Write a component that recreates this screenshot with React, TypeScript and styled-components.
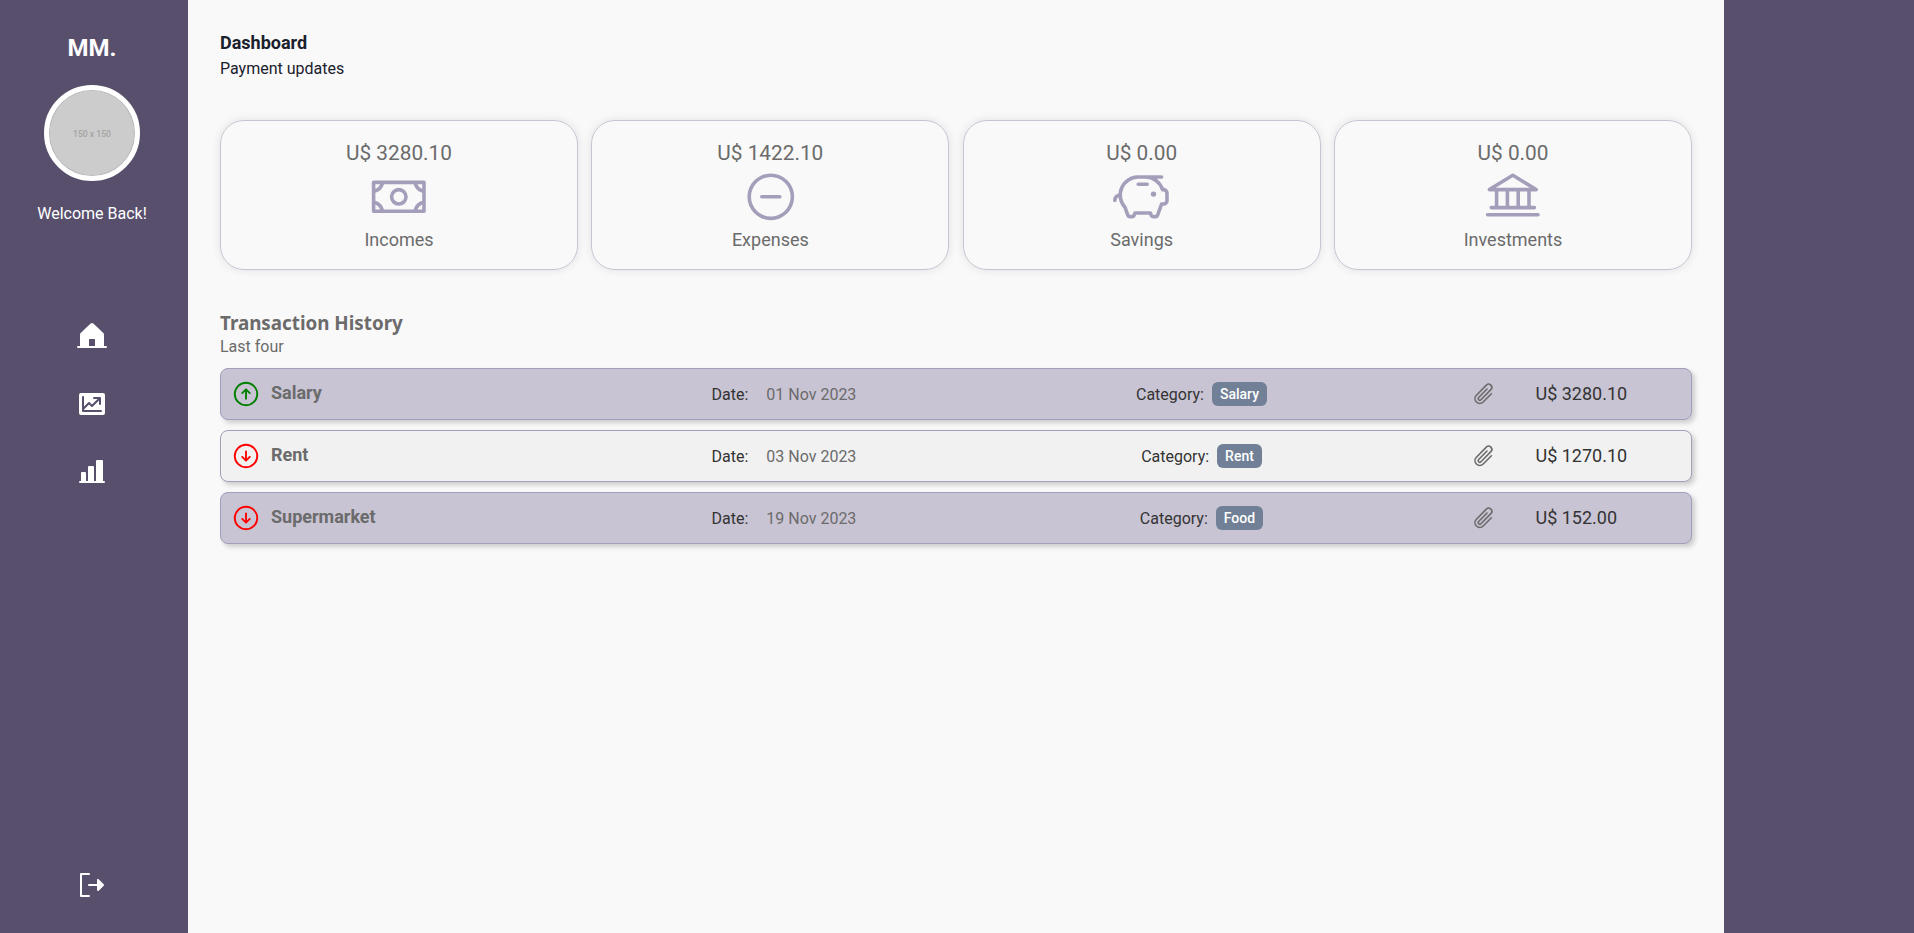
import React from "react";
import styled, { createGlobalStyle } from "styled-components";
import {
  PiMoney,
  PiMinusCircle,
  PiPiggyBank,
  PiBank,
  PiChartLineUpFill,
  PiChartBarFill,
  PiSignOutFill,
  PiArrowCircleUp,
  PiArrowCircleDown,
  PiPaperclip,
} from "react-icons/pi";

const GlobalStyle = createGlobalStyle`
  *, *::before, *::after { box-sizing: border-box; margin: 0; padding: 0; }
  body {
    background: #584f6d;
    font-family: Roboto, "Liberation Sans", sans-serif;
    font-size: 16px;
    line-height: 24px;
    color: #1a202c;
  }
  svg { display: block; }
`;

const Page = styled.div`
  display: flex;
  height: 100vh;
  min-height: 933px;
`;

const Sidebar = styled.aside`
  display: flex;
  flex-direction: column;
  align-items: center;
  flex: 0 0 188px;
  padding: 30px 4px 32px 0;
  color: #fff;
`;

const Brand = styled.h1`
  font-size: 24px;
  line-height: 36px;
  font-weight: 700;
`;

const Avatar = styled.div`
  display: flex;
  align-items: center;
  justify-content: center;
  width: 96px;
  height: 96px;
  margin-top: 19px;
  padding-top: 2px;
  border: 5px solid #fff;
  border-radius: 50%;
  background: #ccc;
  box-shadow: inset 0 0 0 0.6px #aaa;
  color: #a3a3a3;
  font: 500 8.6px Roboto, sans-serif;
`;

const Welcome = styled.p`
  margin-top: 21px;
`;

const Nav = styled.nav`
  display: flex;
  flex-direction: column;
  gap: 36px;
  margin-top: 94px;
  font-size: 32px;
`;

const SignOut = styled.div`
  margin-top: auto;
  padding-right: 2px;
  font-size: 32px;
`;

const Main = styled.main`
  flex: 0 0 1536px;
  padding: 29px 32px;
  background: #f9f9f9;
`;

const PageTitle = styled.h2`
  font-size: 18px;
  line-height: 27px;
  font-weight: 700;
`;

const PageNote = styled.p`
  margin-top: 1px;
`;

const Cards = styled.section`
  display: grid;
  grid-template-columns: repeat(4, 1fr);
  gap: 13.33px;
  margin-top: 39px;
`;

const Card = styled.article`
  display: flex;
  flex-direction: column;
  align-items: center;
  height: 150px;
  padding-top: 17px;
  border: 1px solid #c9c4d3;
  border-radius: 24px;
  box-shadow: 0 0 10px rgba(0, 0, 0, 0.1);
  color: #6b6b6b;
`;

const CardAmount = styled.p`
  font-size: 20.8px;
  line-height: 30px;
`;

const CardIcon = styled.div`
  color: #a59ebb;
  font-size: 57.6px;
`;

const CardLabel = styled.p`
  font-size: 18px;
  line-height: 27px;
`;

const History = styled.section`
  margin-top: 40px;
  color: #6b6b6b;
`;

const HistoryTitle = styled.h3`
  font-family: "Noto Sans", sans-serif;
  font-size: 18.8px;
  line-height: 27px;
  font-weight: 700;
`;

const HistoryNote = styled.p`
  line-height: 20px;
`;

const Rows = styled.div`
  display: flex;
  flex-direction: column;
  gap: 10px;
  margin-top: 11px;
`;

const Row = styled.div<{ $tinted: boolean }>`
  display: grid;
  grid-template-columns: 480.5px 244.5px 491px 88.5px 1fr;
  align-items: center;
  height: 52px;
  padding-left: 10px;
  border: 1px solid #a59ebb;
  border-radius: 8px;
  background: ${(p) => (p.$tinted ? "#c9c4d3" : "#f1f1f1")};
  box-shadow: 3px 3px 5px rgba(0, 0, 0, 0.18);
  color: #333;
`;

const Entry = styled.div<{ $income: boolean }>`
  display: flex;
  align-items: center;
  gap: 10px;
  svg {
    color: ${(p) => (p.$income ? "green" : "red")};
    font-size: 30px;
  }
`;

const EntryName = styled.strong`
  padding-bottom: 3px;
  color: #6b6b6b;
  font-size: 18px;
  line-height: 27px;
  font-weight: 700;
`;

const DateCell = styled.div`
  display: flex;
  gap: 18px;
  padding-top: 2px;
`;

const DateValue = styled.span`
  color: #6b6b6b;
`;

const CategoryCell = styled.div`
  display: flex;
  align-items: center;
  justify-content: center;
  gap: 8px;
`;

const CategoryLabel = styled.span`
  padding-top: 1px;
`;

const Tag = styled.span`
  height: 24px;
  padding: 0 8px;
  border-radius: 6px;
  background: #718096;
  color: #fff;
  font-size: 14px;
  font-weight: 500;
`;

const Attachment = styled.div`
  display: flex;
  padding-left: 24px;
  color: #6b6b6b;
  font-size: 25.6px;
`;

const RowAmount = styled.span`
  font-size: 18px;
`;

// Solid house with a doorway, standing on a ground line.
function HouseIcon() {
  return (
    <svg width="1em" height="1em" viewBox="0 0 256 256" fill="currentColor">
      <path
        fillRule="evenodd"
        d="M240,208H224V115.5a16,16,0,0,0-5.2-11.8l-80-75.5a16,16,0,0,0-21.6,0l-80,75.5A16,16,0,0,0,32,115.5V208H16a8,8,0,0,0,0,16H240a8,8,0,0,0,0-16ZM152,208H104V156a4,4,0,0,1,4-4h40a4,4,0,0,1,4,4Z"
      />
    </svg>
  );
}

const cards = [
  { amount: "U$ 3280.10", label: "Incomes", Icon: PiMoney },
  { amount: "U$ 1422.10", label: "Expenses", Icon: PiMinusCircle },
  { amount: "U$ 0.00", label: "Savings", Icon: PiPiggyBank },
  { amount: "U$ 0.00", label: "Investments", Icon: PiBank },
];

const transactions = [
  { name: "Salary", date: "01 Nov 2023", category: "Salary", amount: "U$ 3280.10", income: true },
  { name: "Rent", date: "03 Nov 2023", category: "Rent", amount: "U$ 1270.10", income: false },
  { name: "Supermarket", date: "19 Nov 2023", category: "Food", amount: "U$ 152.00", income: false },
];

export default function App() {
  return (
    <>
      <GlobalStyle />
      <Page>
        <Sidebar>
          <Brand>MM.</Brand>
          <Avatar>150 x 150</Avatar>
          <Welcome>Welcome Back!</Welcome>
          <Nav>
            <HouseIcon />
            <PiChartLineUpFill />
            <PiChartBarFill />
          </Nav>
          <SignOut>
            <PiSignOutFill />
          </SignOut>
        </Sidebar>
        <Main>
          <PageTitle>Dashboard</PageTitle>
          <PageNote>Payment updates</PageNote>
          <Cards>
            {cards.map(({ amount, label, Icon }) => (
              <Card key={label}>
                <CardAmount>{amount}</CardAmount>
                <CardIcon>
                  <Icon />
                </CardIcon>
                <CardLabel>{label}</CardLabel>
              </Card>
            ))}
          </Cards>
          <History>
            <HistoryTitle>Transaction History</HistoryTitle>
            <HistoryNote>Last four</HistoryNote>
            <Rows>
              {transactions.map((t, i) => (
                <Row key={t.name} $tinted={i % 2 === 0}>
                  <Entry $income={t.income}>
                    {t.income ? <PiArrowCircleUp /> : <PiArrowCircleDown />}
                    <EntryName>{t.name}</EntryName>
                  </Entry>
                  <DateCell>
                    <span>Date:</span>
                    <DateValue>{t.date}</DateValue>
                  </DateCell>
                  <CategoryCell>
                    <CategoryLabel>Category:</CategoryLabel>
                    <Tag>{t.category}</Tag>
                  </CategoryCell>
                  <Attachment>
                    <PiPaperclip />
                  </Attachment>
                  <RowAmount>{t.amount}</RowAmount>
                </Row>
              ))}
            </Rows>
          </History>
        </Main>
      </Page>
    </>
  );
}
